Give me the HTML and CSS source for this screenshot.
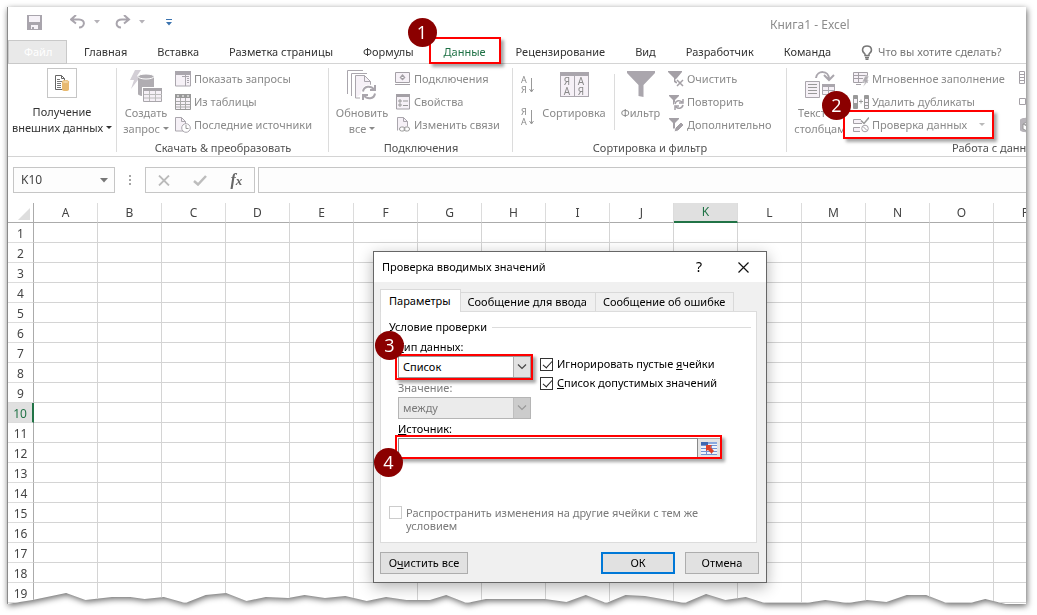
FILE: index.html
```html
<!DOCTYPE html>
<html lang="ru">
<head>
<meta charset="utf-8">
<title>Книга1 - Excel</title>
<link rel="stylesheet" href="styles.css">
</head>
<body>
<div class="shadow">
<main class="window">
  <header class="titlebar">
    <div class="quick">
      <button class="q-save" aria-label="Сохранить"><svg width="15" height="15" viewBox="0 0 15 15"><path d="M0 0h15v15H0z" fill="#a9a5ad"/><path d="M2 1h11v6H2z" fill="#f6f2f8"/><path d="M4 10h7v4H4z" fill="#f6f2f8"/><path d="M5 12h2v2H5z" fill="#a9a5ad"/></svg></button>
      <button class="q-undo" aria-label="Отменить"><svg width="16" height="14" viewBox="0 0 16 14" fill="none" stroke="#a9a5ad" stroke-width="2"><path d="M6 0L1 4.500l5 4M1.500 4.500H9c7 0 6 8 0 8"/></svg></button>
      <svg class="q-caret" width="6" height="4" viewBox="0 0 6 4"><path d="M0 0h6L3 3.500z" fill="#b5b2b8"/></svg>
      <button class="q-redo" aria-label="Вернуть"><svg width="16" height="14" viewBox="0 0 16 14" fill="none" stroke="#a9a5ad" stroke-width="2"><path d="M9 0l5 4.500-5 4M13.500 4.500H7c-7 0-7 8-1 8"/></svg></button>
      <svg class="q-caret" width="6" height="4" viewBox="0 0 6 4"><path d="M0 0h6L3 3.500z" fill="#b5b2b8"/></svg>
      <button class="q-custom" aria-label="Настройка панели"><svg width="6" height="7" viewBox="0 0 6 7" fill="#3b73af"><path d="M0 0h6v1H0zM0 3h6L3 6.500z"/></svg></button>
    </div>
    <span class="doc-title">Книга1 - Excel</span>
  </header>

  <nav class="tabs">
    <button class="tab file">Файл</button>
    <button class="tab">Главная</button>
    <button class="tab">Вставка</button>
    <button class="tab">Разметка страницы</button>
    <button class="tab">Формулы</button>
    <button class="tab current">Данные<span class="mark mark-tab"></span><span class="badge badge-1">1</span></button>
    <button class="tab">Рецензирование</button>
    <button class="tab">Вид</button>
    <button class="tab">Разработчик</button>
    <button class="tab">Команда</button>
    <button class="tab tell"><svg width="12" height="15" viewBox="0 0 12 15" fill="none" stroke="#777" stroke-width="1.500"><path d="M4 10.500V9C0 6 1 1 6 1s6 5 2 8v1.500z"/><path d="M4 12.500h4M4.500 14.200h3"/></svg>Что вы хотите сделать?</button>
  </nav>

  <section class="ribbon">
    <div class="group g-external">
      <div class="tools">
        <button class="big enabled"><span class="framed"><svg width="16" height="16" viewBox="0 0 16 16"><path d="M1.500.5h6l3 3V14.500h-9z" fill="#fff" stroke="#666"/><path d="M7.500.5v3h3" fill="none" stroke="#666"/><path d="M3 4.500h3M3 6.500h5M3 8.500h4M3 10.500h4M3 12.500h4" stroke="#777"/><path d="M8 7v7.500c0 2 7 2 7 0V7z" fill="#e8b96f"/><ellipse cx="11.500" cy="7" rx="3.500" ry="1.500" fill="#f3d6a4" stroke="#e8b96f"/></svg></span><span>Получение<br>внешних данных <i class="caret"></i></span></button>
      </div>
    </div>

    <div class="group g-query">
      <div class="tools">
        <button class="big"><svg width="34" height="34" viewBox="0 0 34 34"><path d="M6 0h6L8 6h4L2 19l3-9H1z" fill="#d3cfd6"/><path d="M9 7v17c0 3 16 3 16 0V7z" fill="#b0adb2"/><ellipse cx="17" cy="6.500" rx="8" ry="2.500" fill="#b0adb2" stroke="#fff"/><path d="M13 17h21v16H13z" fill="#fff"/><path d="M14.500 18.500h18v13h-18z" fill="#f5f0f6" stroke="#a9a6ab"/><path d="M14 18h19v3H14z" fill="#a9a6ab"/><path d="M20.500 21v10M26.500 21v10M15 24.500h18M15 28h18" stroke="#bbb"/></svg><span>Создать<br>запрос <i class="caret"></i></span></button>
        <div class="stack">
          <button class="small"><svg width="16" height="16" viewBox="0 0 16 16"><path d="M.5 1h15v14H.5z" fill="#f6f1f7" stroke="#aaa6ad"/><path d="M0 0h16v4H0z" fill="#aaa6ad"/><path d="M10.500 4v11M12 7.500h2M12 9.500h2M12 11.500h2M7 5.500h7" stroke="#aaa6ad"/></svg>Показать запросы</button>
          <button class="small"><svg width="16" height="16" viewBox="0 0 16 16"><path d="M.5.5h15v15H.5z" fill="#f6f1f7" stroke="#999"/><path d="M0 0h16v4H0z" fill="#999"/><path d="M2 2h2M7 2h2M12 2h2" stroke="#fff"/><path d="M5.500 4v11M10.500 4v11M1 7.500h14M1 10.500h14M1 13h14" stroke="#aaa"/></svg>Из таблицы</button>
          <button class="small"><svg width="16" height="16" viewBox="0 0 16 16"><path d="M.5.5h6l4 4v9.500h-10z" fill="#f6f1f7" stroke="#aaa6ad"/><path d="M6.500.5v4h4" fill="none" stroke="#aaa6ad"/><circle cx="11" cy="11" r="4.300" fill="#fff" stroke="#aaa6ad"/><path d="M11 8v3.500h2.500" fill="none" stroke="#999"/></svg>Последние источники</button>
        </div>
      </div>
      <div class="caption">Скачать &amp; преобразовать</div>
    </div>

    <div class="group g-links">
      <div class="tools">
        <button class="big"><svg width="30" height="30" viewBox="0 0 30 30"><path d="M.5 24V.5H16M4.500 26V3.500H20" fill="none" stroke="#aaa6ad"/><path d="M8.500 28V5.500h9l6 6V17M8.500 28H13" fill="#f6f1f7" stroke="#aaa6ad"/><path d="M17.500 5.500v6h6" fill="none" stroke="#aaa6ad"/><circle cx="22" cy="22.500" r="8" fill="#fff"/><path d="M16 21.500c1-6 8-6 11-2M28 15v5h-5M28 23.500c-1 6-8 6-11 2M16 30v-5h5" fill="none" stroke="#aaa6ad" stroke-width="2"/></svg><span>Обновить<br>все <i class="caret"></i></span></button>
        <div class="stack">
          <button class="small"><svg width="16" height="14" viewBox="0 0 16 14"><path d="M.5.5h14v10H.5z" fill="#f6f1f7" stroke="#a4a0a6"/><path d="M7.500 2l3 3.500-3 3-3-3z" fill="#a4a0a6"/><path d="M6.500 5.500h2M3 12.500h9" stroke="#fff"/><path d="M0 12.500h15" stroke="#a4a0a6"/></svg>Подключения</button>
          <button class="small"><svg width="16" height="16" viewBox="0 0 16 16"><path d="M1.500 1h13v14h-13z" fill="#f6f1f7" stroke="#a4a0a6"/><path d="M1 0h14v3H1z" fill="#a4a0a6"/><path d="M4 6h2v2H4zM4 10h2v2H4z" fill="none" stroke="#999"/><path d="M8 7h5M8 11.500h5" stroke="#999"/></svg>Свойства</button>
          <button class="small"><svg width="16" height="16" viewBox="0 0 16 16"><path d="M2.500 13.500V.5h6l4 4v5" fill="#f6f1f7" stroke="#aaa6ad"/><path d="M8.500.5v4h4" fill="none" stroke="#aaa6ad"/><rect x="4.500" y="10" width="5.500" height="4" rx="2" fill="#fff" stroke="#999"/><rect x="9" y="10" width="5.500" height="4" rx="2" fill="none" stroke="#999"/></svg>Изменить связи</button>
        </div>
      </div>
      <div class="caption">Подключения</div>
    </div>

    <div class="group g-sort">
      <div class="tools">
        <div class="orders">
          <button class="order" aria-label="По возрастанию"><span>А<br>Я</span><svg width="5" height="15" viewBox="0 0 5 15" fill="none" stroke="#999"><path d="M2.500 0v14M.5 11l2 3 2-3"/></svg></button>
          <button class="order" aria-label="По убыванию"><span>Я<br>А</span><svg width="5" height="15" viewBox="0 0 5 15" fill="none" stroke="#999"><path d="M2.500 0v14M.5 11l2 3 2-3"/></svg></button>
        </div>
        <button class="big sorter"><span class="sort-tile"><b>Я<br>А</b><b>А<br>Я</b></span><span>Сортировка</span></button>
        <button class="big filter"><svg width="28" height="28" viewBox="0 0 28 28"><path d="M0 1h28v2L16.500 15v12l-5-1V15L0 3z" fill="#aaa6ad"/></svg><span>Фильтр</span></button>
        <div class="stack">
          <button class="small"><svg width="16" height="16" viewBox="0 0 16 16"><path d="M0 0h14v1L9 7v6l-3-2V7L0 1z" fill="#a4a0a6"/><path d="M8 8l7 7M15 8l-7 7" stroke="#fff" stroke-width="3"/><path d="M9 9l6 6M15 9l-6 6" stroke="#a4a0a6" stroke-width="1.500"/></svg>Очистить</button>
          <button class="small"><svg width="16" height="16" viewBox="0 0 16 16"><path d="M1 1h10v1L7 6v6l-2-2V6L1 2z" fill="#a4a0a6"/><circle cx="11" cy="10.500" r="5" fill="#fff"/><path d="M7 10c1-4 5-4 7-2M15 5v4h-4M15 11c-1 4-5 4-7 2M7 16v-4h4" fill="none" stroke="#a4a0a6" stroke-width="1.500"/></svg>Повторить</button>
          <button class="small"><svg width="16" height="16" viewBox="0 0 16 16"><path d="M1 1h10v1L7 6v7l-2-2V6L1 2z" fill="#a4a0a6"/><path d="M6 15l1-4 6-6 3 3-6 6z" fill="#a4a0a6" stroke="#fff"/></svg>Дополнительно</button>
        </div>
      </div>
      <div class="caption">Сортировка и фильтр</div>
    </div>

    <div class="group g-data">
      <div class="tools">
        <button class="big"><svg width="30" height="30" viewBox="0 0 30 30"><path d="M11 8c1-8 13-8 13 1M19 5l5 5 5-5" fill="none" stroke="#aaa6ad" stroke-width="2"/><path d="M.5 11.500h14v16H.5zM17.500 14.500h12v10h-12z" fill="#f6f1f7" stroke="#aaa6ad"/><path d="M3 14.500h9M3 17.500h9M3 20.500h9M3 23.500h9" stroke="#999"/><path d="M17 14h13v3H17zM23 17h1v8h-1zM17 20h13v1H17z" fill="#aaa6ad"/></svg><span>Текст по<br>столбцам</span></button>
        <div class="stack">
          <button class="small"><svg width="16" height="16" viewBox="0 0 16 16"><path d="M.5 1.500h14v10H.5z" fill="#f6f1f7" stroke="#a4a0a6"/><path d="M1 4.500h13M1 7.500h9M5.500 2v9M3 13.500h5" stroke="#a4a0a6"/><path d="M12 5h4l-2 4h2l-6 7 2-5H9z" fill="#b0adb2" stroke="#fff" stroke-width=".5"/></svg>Мгновенное заполнение</button>
          <button class="small"><svg width="16" height="16" viewBox="0 0 16 16"><path d="M.5 1.500h4v13h-4zM11.500 1.500h4v13h-4z" fill="#f6f1f7" stroke="#999"/><path d="M1 2h3v3H1zM1 9h3v5H1zM12 2h3v3h-3z" fill="#999"/><path d="M6 7.500h4M8 5.500v4M12 8.500h3M12 11.500h3" stroke="#999"/></svg>Удалить дубликаты</button>
          <button class="small checked"><svg width="16" height="16" viewBox="0 0 16 16"><path d="M8 2.500H.5v4H9M7 10.500H.5v4H7" fill="#f6f1f7" stroke="#a4a0a6"/><path d="M8 3.500l3 3 5-6" fill="none" stroke="#999" stroke-width="1.500"/><circle cx="12" cy="11.500" r="3.300" fill="#fff" stroke="#a4a0a6"/><path d="M10 9.500l4 4" stroke="#a4a0a6"/></svg>Проверка данных<i class="caret far"></i><span class="mark mark-check"></span><span class="badge badge-2">2</span></button>
        </div>
        <div class="stack last">
          <button class="small" aria-label="Консолидация"><svg width="16" height="16" viewBox="0 0 16 16"><path d="M.5.5h5v12h-5zM.5 3.500h5M.5 6.500h5M.5 9.500h5M7 6.500h5M12.500.5h3v12h-3z" fill="none" stroke="#a4a0a6"/></svg></button>
          <button class="small" aria-label="Отношения"><svg width="16" height="16" viewBox="0 0 16 16"><path d="M.5 4.500h6v6h-6zM7 8.500h5M10.500 8.500h5v5h-5z" fill="none" stroke="#a4a0a6"/></svg></button>
          <button class="small" aria-label="Модель данных"><svg width="16" height="16" viewBox="0 0 16 16"><path d="M1 3v10c0 3 14 3 14 0V3C15 0 1 0 1 3z" fill="#b7b4b9"/><path d="M4 7l4-2 4 2v5l-4 2-4-2zM4 7l4 2 4-2M8 9v5" fill="#fff" stroke="#999"/></svg></button>
        </div>
      </div>
      <div class="caption">Работа с данными</div>
    </div>
  </section>

  <section class="formula">
    <div class="namebox"><input value="K10" aria-label="Имя"><svg width="8" height="5" viewBox="0 0 8 5"><path d="M0 0h8L4 4.500z" fill="#777"/></svg></div>
    <svg class="dots" width="2" height="11" viewBox="0 0 2 11" fill="#a5a5a5"><path d="M0 0h2v2H0zM0 4h2v2H0zM0 8h2v2H0z"/></svg>
    <div class="fx">
      <button aria-label="Отмена ввода"><svg width="12" height="11" viewBox="0 0 12 11" stroke="#bbb" stroke-width="1.800"><path d="M1 .5l10 10M11 .5l-10 10"/></svg></button>
      <button aria-label="Ввод"><svg width="14" height="11" viewBox="0 0 14 11" fill="none" stroke="#bdbdbd" stroke-width="2.500"><path d="M1 6l4 3.500L13 1"/></svg></button>
      <button class="fn" aria-label="Вставить функцию">f<small>x</small></button>
    </div>
    <input class="formula-input" aria-label="Строка формул">
  </section>

  <section class="sheet">
    <table>
      <thead><tr><th class="corner"><svg width="12" height="12" viewBox="0 0 12 12"><path d="M12 0v12H0z" fill="#dedede"/></svg></th><th>A</th><th>B</th><th>C</th><th>D</th><th>E</th><th>F</th><th>G</th><th>H</th><th>I</th><th>J</th><th class="sel">K</th><th>L</th><th>M</th><th>N</th><th>O</th><th>P</th></tr></thead>
      <tbody id="rows"></tbody>
    </table>

    <div class="dialog" role="dialog" aria-label="Проверка вводимых значений">
      <div class="dlg-title"><span>Проверка вводимых значений</span><button class="help" aria-label="Справка">?</button><button class="close" aria-label="Закрыть"><svg width="11" height="11" viewBox="0 0 11 11" stroke="#111" stroke-width="1.200"><path d="M.5.5l10 10M10.500.5l-10 10"/></svg></button></div>
      <div class="dlg-body">
        <div class="dlg-tabs"><button class="on">Параметры</button><button>Сообщение для ввода</button><button>Сообщение об ошибке</button></div>
        <div class="panel">
          <div class="legend">Условие проверки</div>
          <div class="columns">
            <div class="fields">
              <div class="field">
                <label for="type"><u>Т</u>ип данных:</label>
                <div class="pick"><select id="type"><option>Список</option></select><span class="arrow"><svg width="10" height="6" viewBox="0 0 10 6" fill="none" stroke="#444" stroke-width="1.200"><path d="M1 .5l4 4 4-4"/></svg></span><span class="mark mark-type"></span><span class="badge badge-3">3</span></div>
              </div>
              <div class="field off">
                <label for="cond">Значение:</label>
                <div class="pick"><select id="cond" disabled><option>между</option></select><span class="arrow"><svg width="10" height="6" viewBox="0 0 10 6" fill="none" stroke="#999" stroke-width="1.200"><path d="M1 .5l4 4 4-4"/></svg></span></div>
              </div>
            </div>
            <div class="checks">
              <label><input type="checkbox" checked><span>Игнорировать пустые <u>я</u>чейки</span></label>
              <label><input type="checkbox" checked><span><u>С</u>писок допустимых значений</span></label>
            </div>
          </div>
          <div class="field source">
            <label for="src"><u>И</u>сточник:</label>
            <div class="pick"><input id="src" type="text"><button class="range" aria-label="Выбрать диапазон"><svg width="16" height="13" viewBox="0 0 16 13"><path d="M0 0h16v13H0z" fill="#eef4fc"/><path d="M0 0h7v3H0z" fill="#3f68b0"/><path d="M7 0h9v2H7z" fill="#8aa9de"/><path d="M0 3.500h16M0 6.500h16M0 9.500h16M0 12.500h16M5.500 3v10M10.500 3v10" stroke="#7394d2"/><path d="M5 3h6L9.500 5l3.500 4-2.500 2.500L7 8 5 9z" fill="#dd4128"/></svg></button><span class="mark mark-src"></span><span class="badge badge-4">4</span></div>
          </div>
          <label class="spread"><input type="checkbox" disabled><span>Распространить изменения на другие ячейки с тем же условием</span></label>
        </div>
        <div class="actions"><button class="clear">О<u>ч</u>истить все</button><button class="ok">ОК</button><button>Отмена</button></div>
      </div>
    </div>
  </section>
</main>
</div>
<script src="rows.js"></script>
</body>
</html>
```

FILE: styles.css
```css
* { box-sizing: border-box; }
body {
  margin: 0;
  background: #fff;
  overflow: hidden;
  font: 11px/16px "Noto Sans", "Open Sans", sans-serif;
  color: #444;
}
button, input, select { font: inherit; color: inherit; }
button { border: 0; background: none; padding: 0; white-space: nowrap; }
svg { display: block; flex: none; }

.shadow { padding: 7px 11px 11px 7px; filter: drop-shadow(1px 2px 3px rgba(0, 0, 0, .6)); }
.window {
  background: #fff;
  border: solid #8a8a8a;
  border-width: 0 0 0 1px;
  overflow: hidden;
  /* torn lower edge */
  clip-path: polygon(0 0, 100% 0, 100% 100%, 98% 100%, 96% calc(100% - 5px), 94.500% calc(100% - 1px), 92.200% calc(100% - 1px), 90.200% calc(100% - 9px), 88.300% calc(100% - 9px), 86.300% calc(100% - 2px), 84.400% calc(100% - 4px), 82.500% calc(100% - 1px), 80.300% calc(100% - 4px), 78.400% calc(100% - 1px), 74.400% calc(100% - 1px), 72.500% calc(100% - 7px), 70.500% calc(100% - 4px), 68.600% calc(100% - 10px), 66.500% calc(100% - 1px), 62.600% calc(100% - 8px), 60.700% calc(100% - 9px), 58.800% calc(100% - 1px), 56.800% calc(100% - 9px), 54.900% calc(100% - 2px), 52.800% calc(100% - 5px), 47% calc(100% - 5px), 45.100% calc(100% - 1px), 43.100% calc(100% - 9px), 41.500% calc(100% - 4px), 39.200% calc(100% - 4px), 37.200% calc(100% - 7px), 35.300% calc(100% - 3px), 33.200% calc(100% - 8px), 31.200% calc(100% - 6px), 29.200% calc(100% - 9px), 27.600% calc(100% - 6px), 25.400% calc(100% - 7px), 23.500% calc(100% - 3px), 21.500% calc(100% - 11px), 19.500% calc(100% - 9px), 17.500% calc(100% - 1px), 15.400% calc(100% - 7px), 13.500% calc(100% - 5px), 12.100% calc(100% - 7px), 10.300% calc(100% - 7px), 7.700% calc(100% - 4px), 5.800% calc(100% - 11px), 2.500% calc(100% - 4px), 0 100%);
}

/* title bar and tabs */
.titlebar { display: flex; align-items: center; height: 33px; color: #8c8c8c; }
.quick { display: flex; align-items: center; width: 762px; padding-left: 19px; padding-bottom: 3px; }
.q-undo { margin-left: 28px; }
.q-redo { margin-left: 15px; }
.q-caret { margin-left: 8px; }
.q-custom { margin-left: 21px; }
.doc-title { padding-top: 3px; font-size: 12px; }

.tabs { display: flex; height: 24px; border-bottom: 1px solid #d4d4d4; padding-right: 4px; }
.tab { position: relative; padding: 0 15px; color: #333; height: 24px; flex: none; }
.tab.file { width: 59px; background: #e9e9e9; border: 1px solid #c9c9c9; color: #fff; margin-right: 2px; }
.tab.current { color: #1e7145; z-index: 2; }
.tab.tell { display: flex; align-items: center; gap: 5px; color: #777; }

/* annotations */
.mark { position: absolute; border: 2px solid #f00; box-shadow: 3px 3px 3px rgba(0, 0, 0, .35); pointer-events: none; }
.badge {
  position: absolute;
  width: 29px;
  height: 29px;
  border-radius: 50%;
  background: #8b0000;
  color: #fff;
  font: 500 18px/29px "Open Sans", "Noto Sans", sans-serif;
  text-align: center;
}
.mark-tab { inset: -3px 0 0 0; }
.badge-1 { left: -21px; top: -22px; }
.mark-check { inset: -3px -9px -3px -10px; }
.badge-2 { left: -31px; top: -22px; }
.mark-type { inset: -2px -2px -2px -3px; }
.badge-3 { left: -23px; top: -25px; }
.mark-src { inset: -3px -1px 0 -3px; }
.badge-4 { left: -24px; top: 10px; }

/* ribbon */
.ribbon { display: flex; height: 93px; border-bottom: 1px solid #d4d4d4; color: #8a8a8a; overflow: hidden; }
.group { position: relative; flex: none; padding-top: 3px; }
.group::after { content: ""; position: absolute; right: 0; top: 4px; bottom: 4px; width: 1px; background: #dcdcdc; }
.g-external { width: 109px; }
.g-query { width: 212px; }
.g-links { width: 184px; }
.g-sort { width: 274px; }
.g-data { width: 428px; }
.tools { display: flex; height: 73px; }
.caption { text-align: center; color: #505050; line-height: 16px; }
.big { display: flex; flex-direction: column; align-items: center; justify-content: space-between; line-height: 16px; height: 70px; padding-top: 3px; }
.big.enabled { color: #333; height: 69px; padding-top: 1px; width: 108px; }
.framed { display: grid; place-items: center; width: 30px; height: 30px; border: 1px solid #c6c6c6; }
.stack { display: flex; flex-direction: column; }
.small { position: relative; display: flex; align-items: center; gap: 3px; height: 23px; text-align: left; }
.caret { display: inline-block; border: 3px solid transparent; border-top-color: currentColor; border-bottom: 0; vertical-align: 3px; }
.caret.far { margin-left: 9px; opacity: .6; }
.g-query .big, .g-links .big, .g-data .big { width: 54px; }
.g-query .tools { padding-left: 2px; gap: 2px; }
.g-links .tools { padding-left: 6px; gap: 6px; }
.g-sort .tools { padding-left: 8px; }
.g-data .tools { padding-left: 6px; gap: 6px; }
.orders { display: flex; flex-direction: column; gap: 12px; padding-top: 8px; width: 20px; }
.order { display: flex; align-items: center; gap: 2px; font-size: 9px; line-height: 10px; }
.big.sorter, .big.filter { height: 54px; }
.sorter { width: 66px; }
.sort-tile { display: flex; gap: 1px; border: 1px solid #aaa6ad; border-top-width: 4px; margin-top: 2px; background: #aaa6ad; font-size: 10px; line-height: 10px; }
.sort-tile b { width: 13px; background: #f6f1f7; font-weight: 400; }
.filter { width: 55px; margin: 0 0 0 6px; }
.filter::before { content: ""; position: absolute; left: 101px; top: 10px; height: 56px; width: 1px; background: #dcdcdc; }
.checked { z-index: 2; }
.g-data .last { margin-left: 8px; }
.g-data .small { align-self: flex-start; }

/* formula bar */
.formula { display: flex; align-items: center; height: 46px; padding-left: 5px; font-size: 12px; }
.namebox { display: flex; align-items: center; width: 102px; height: 26px; border: 1px solid #c6c6c6; background: #fdfdfd; padding-right: 6px; }
.namebox input { border: 0; background: none; flex: 1; min-width: 0; padding: 0 0 0 7px; }
.dots { margin: 0 14px; }
.fx { display: flex; align-items: center; justify-content: space-around; width: 110px; height: 26px; border: 1px solid #c6c6c6; background: #fdfdfd; }
.fn { font: italic bold 16px/20px "Liberation Serif", serif; color: #666; }
.fn small { font-size: 13px; }
.formula-input { flex: 1; min-width: 0; height: 26px; margin-left: 3px; border: 1px solid #c6c6c6; border-right: 0; background: #fdfdfd; }

/* sheet */
.sheet { position: relative; height: 401px; }
.sheet table { border-collapse: separate; border-spacing: 0; table-layout: fixed; width: 1050px; font-size: 12px; }
.sheet th { width: 64px; height: 20px; padding: 0; border-right: 1px solid #dcdcdc; border-bottom: 1px solid #ababab; font-weight: 400; line-height: 19px; }
.sheet td { height: 20px; padding: 0; border-right: 1px solid #d4d4d4; border-bottom: 1px solid #d4d4d4; }
.sheet tbody th { border-right-color: #ababab; border-bottom-color: #dcdcdc; line-height: 17px; padding-top: 2px; }
.sheet .corner { width: 26px; border-right-color: #ababab; }
.corner svg { margin: 3px 0 0 10px; }
.sheet .sel { background: #e0e0e0; color: #217346; border-bottom: 2px solid #217346; line-height: 18px; }
.sheet tbody .sel { border-bottom: 1px solid #dcdcdc; border-right: 2px solid #217346; line-height: 17px; }

/* dialog */
.dialog {
  position: absolute;
  left: 365px;
  top: 48px;
  width: 394px;
  border: 1px solid #666;
  background: #f0f0f0;
  box-shadow: 0 4px 14px rgba(0, 0, 0, .3);
  color: #000;
}
.dlg-title { display: flex; align-items: center; height: 30px; background: #fff; padding-left: 8px; }
.dlg-title span { flex: 1; }
.help { width: 10px; font-size: 14px; }
.close { width: 46px; padding-left: 10px; margin-left: 24px; margin-right: -8px; }
.dlg-body { padding: 7px 7px 8px 6px; }
.dlg-tabs { display: flex; align-items: flex-end; height: 22px; }
.dlg-tabs button { height: 19px; border: 1px solid #d9d9d9; border-width: 1px 1px 0 0; padding: 0 8px 0 7px; background: #f0f0f0; }
.dlg-tabs .on { position: relative; border-left-width: 1px; background: #fff; margin-bottom: -1px; padding: 0 9px 0 8px; height: 23px; }
.panel { border: 1px solid #dcdcdc; background: #fff; height: 232px; padding: 7px 5px 0 8px; margin-right: 2px; }
.legend { display: flex; align-items: center; gap: 5px; }
.legend::after { content: ""; flex: 1; height: 1px; background: #dcdcdc; }
.columns { display: flex; padding-left: 9px; padding-top: 4px; gap: 9px; }
.fields { width: 133px; }
.field { height: 41px; }
.field label { display: block; margin-bottom: 1px; }
.off { color: #7a7a7a; }
.pick { position: relative; display: flex; height: 22px; }
.pick select { appearance: none; width: 100%; height: 22px; border: 1px solid #999; border-radius: 0; background: #fff; padding: 0 20px 0 4px; opacity: 1; }
.off select { background: #ebebeb; border-color: #b5b5b5; }
.arrow { position: absolute; right: 1px; top: 1px; bottom: 1px; width: 17px; display: grid; place-items: center; background: #e1e1e1; border-left: 1px solid #adadad; pointer-events: none; }
.off .arrow { background: #ccc; border-color: #bfbfbf; }
.checks { display: flex; flex-direction: column; gap: 3px; padding-top: 17px; }
.checks label { display: flex; align-items: center; gap: 4px; white-space: nowrap; }
input[type="checkbox"] { appearance: none; position: relative; flex: none; width: 13px; height: 13px; margin: 0; border: 1px solid #333; background: #fff; }
input[type="checkbox"]:checked::after { content: ""; position: absolute; left: 4px; top: 0; width: 4px; height: 8px; border: solid #222; border-width: 0 1px 1px 0; transform: rotate(42deg); }
input[type="checkbox"]:disabled { border-color: #ccc; }
.source { margin-left: 9px; margin-right: 30px; }
.source .pick { height: 21px; }
.source input { flex: 1; min-width: 0; border: 1px solid #888; padding: 0 4px; background: #fff; }
.range { display: grid; place-items: center; width: 23px; background: #e4e4e4; border: 1px solid #aaa; border-left: 0; }
.spread { display: flex; gap: 4px; line-height: 13px; color: #7a7a7a; margin-top: 44px; padding-right: 30px; }
.actions { display: flex; gap: 10px; padding-top: 9px; }
.actions button { width: 74px; height: 22px; border: 1px solid #adadad; background: #e1e1e1; line-height: 20px; }
.actions .clear { width: 88px; margin-right: auto; }
.actions .ok { border: 2px solid #0078d7; line-height: 18px; }
```

FILE: rows.js
```js
const body = document.getElementById("rows");
for (let r = 1; r <= 19; r++) {
  const tr = document.createElement("tr");
  const th = document.createElement("th");
  th.textContent = r;
  if (r === 10) th.className = "sel";
  tr.append(th);
  for (let c = 0; c < 16; c++) tr.append(document.createElement("td"));
  body.append(tr);
}
```
